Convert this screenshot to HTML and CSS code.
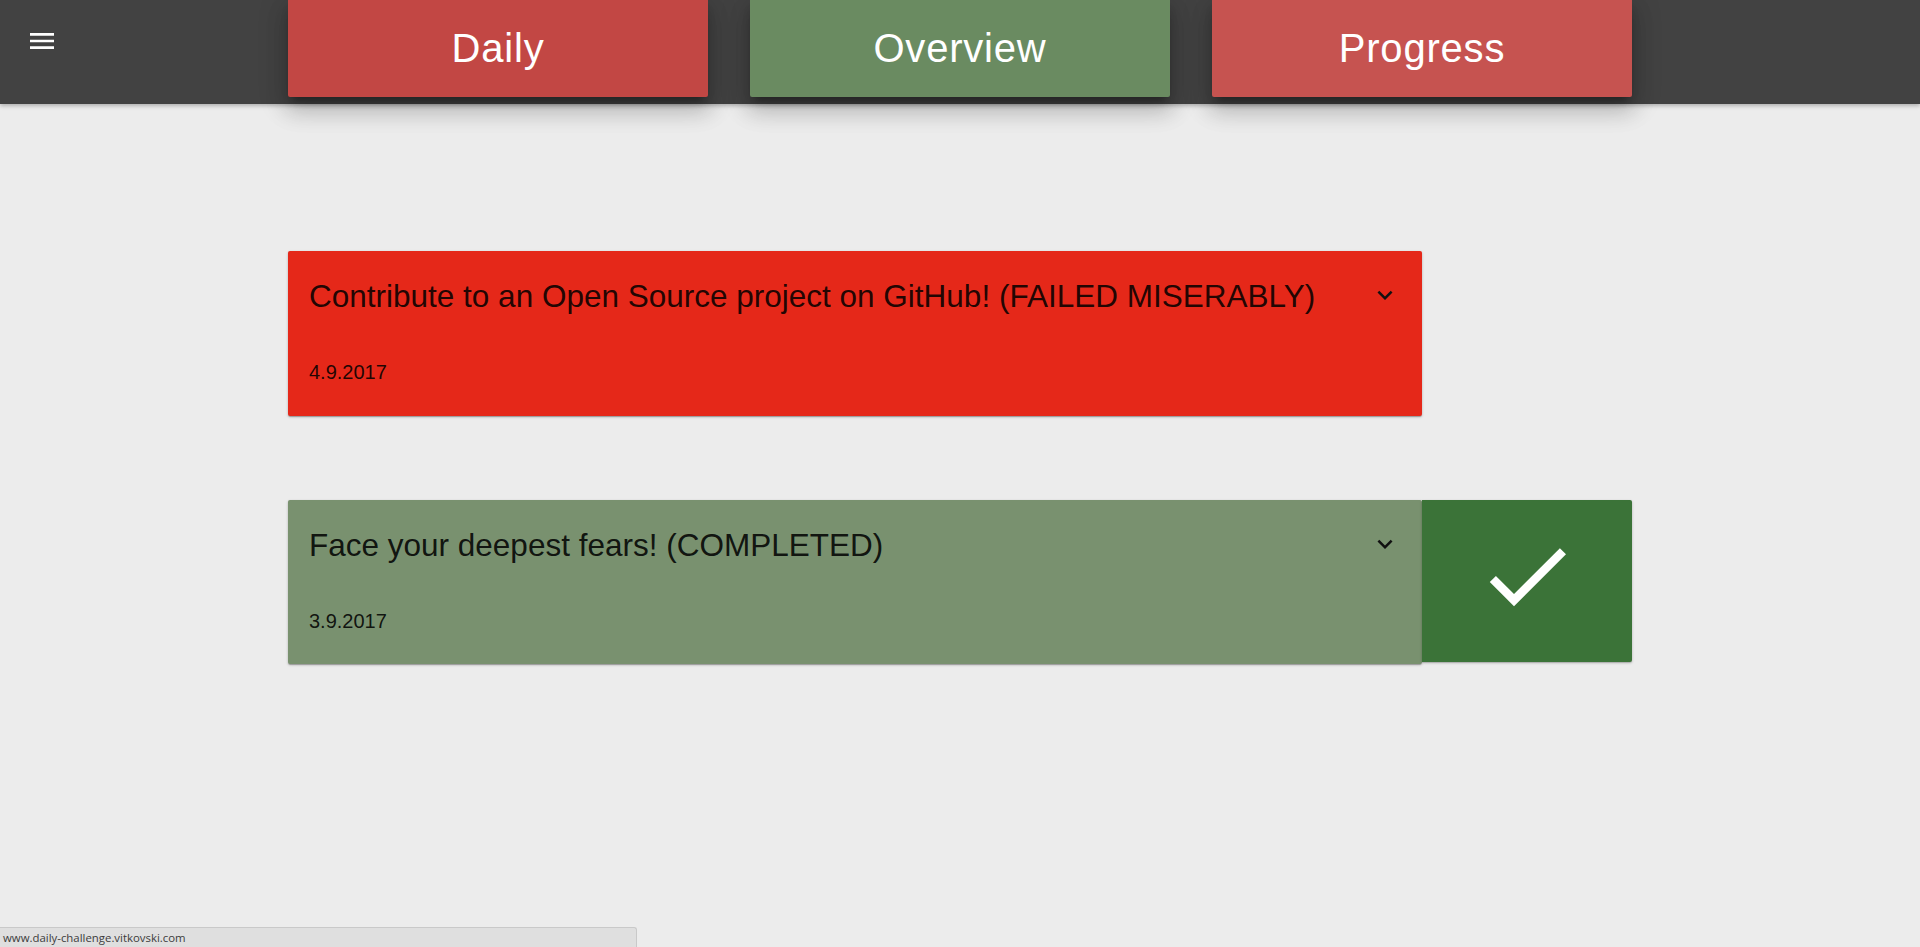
FILE: index.html
```html
<!DOCTYPE html>
<html lang="en">
<head>
<meta charset="utf-8">
<title>Daily Challenge</title>
<link rel="stylesheet" href="styles.css">
</head>
<body>
<header class="topbar">
  <button class="menu-btn" aria-label="menu">
    <svg viewBox="0 0 24 24" width="32" height="32"><path fill="#fff" d="M3 18h18v-2H3v2zm0-5h18v-2H3v2zm0-7v2h18V6H3z"/></svg>
  </button>
  <nav class="tabs">
    <a class="tab tab-daily">Daily</a>
    <a class="tab tab-overview">Overview</a>
    <a class="tab tab-progress">Progress</a>
  </nav>
</header>

<main class="content">
  <div class="row">
    <section class="card card-failed">
      <div class="card-head">
        <h2 class="card-title">Contribute to an Open Source project on GitHub! (FAILED MISERABLY)</h2>
        <svg class="chevron" viewBox="0 0 24 24" width="30" height="30"><path fill="#111" d="M16.59 8.59L12 13.17 7.41 8.59 6 10l6 6 6-6z"/></svg>
      </div>
      <div class="card-date">4.9.2017</div>
    </section>
  </div>

  <div class="row">
    <section class="card card-done">
      <div class="card-head">
        <h2 class="card-title">Face your deepest fears! (COMPLETED)</h2>
        <svg class="chevron" viewBox="0 0 24 24" width="30" height="30"><path fill="#111" d="M16.59 8.59L12 13.17 7.41 8.59 6 10l6 6 6-6z"/></svg>
      </div>
      <div class="card-date">3.9.2017</div>
    </section>
    <div class="check-box">
      <svg viewBox="0 0 24 24" width="104" height="104"><path fill="#fff" d="M9 16.17L4.83 12l-1.42 1.41L9 19 21 7l-1.41-1.41z"/></svg>
    </div>
  </div>
</main>

<div class="status-bar">www.daily-challenge.vitkovski.com</div>
</body>
</html>
```

FILE: styles.css
```css
html, body {
  margin: 0;
  padding: 0;
}

body {
  background: #ececec;
  font-family: "Liberation Sans", Arial, sans-serif;
  min-height: 947px;
}

.topbar {
  position: relative;
  height: 104px;
  background: #424242;
  box-shadow: 0 2px 4px rgba(0, 0, 0, 0.25);
  z-index: 2;
}

.menu-btn {
  position: absolute;
  left: 26px;
  top: 25px;
  width: 32px;
  height: 32px;
  padding: 0;
  border: 0;
  background: none;
  cursor: pointer;
}

.menu-btn svg {
  display: block;
}

.tabs {
  width: 1344px;
  margin: 0 auto;
  display: flex;
  gap: 42px;
}

.tab {
  width: 420px;
  height: 97px;
  display: flex;
  align-items: center;
  justify-content: center;
  color: #fff;
  font-size: 40px;
  letter-spacing: 0.8px;
  border-radius: 0 0 2px 2px;
  box-shadow: 0 14px 22px 2px rgba(0, 0, 0, 0.14), 0 6px 28px 5px rgba(0, 0, 0, 0.12), 0 7px 9px -4px rgba(0, 0, 0, 0.35);
  cursor: pointer;
}

.tab-daily { background: #c24744; }
.tab-overview { background: #6a8b61; }
.tab-progress { background: #c65350; }

.content {
  width: 1344px;
  margin: 147px auto 0;
  display: flex;
  flex-direction: column;
  gap: 84px;
}

.row {
  display: flex;
  align-items: flex-start;
}

.card {
  width: 1134px;
  box-sizing: border-box;
  height: 165px;
  padding: 27px 22px 0 21px;
  border-radius: 2px;
  box-shadow: 0 1px 3px rgba(0, 0, 0, 0.2), 0 1px 1px rgba(0, 0, 0, 0.14), 0 2px 1px -1px rgba(0, 0, 0, 0.12);
  color: rgba(0, 0, 0, 0.87);
}

.card-failed { background: #e52819; }
.card-done { background: #79916f; height: 164px; }

.card-head {
  display: flex;
  align-items: center;
  justify-content: space-between;
}

.card-title {
  margin: 0;
  font-size: 31.5px;
  font-weight: normal;
  line-height: 36px;
}

.chevron {
  display: block;
  flex: none;
  margin-top: -2px;
}

.card-date {
  margin-top: 46px;
  font-size: 20px;
  line-height: 24px;
}

.check-box {
  width: 210px;
  height: 162px;
  background: #3b7338;
  border-radius: 0 2px 2px 0;
  box-shadow: 0 1px 3px rgba(0, 0, 0, 0.2), 0 1px 1px rgba(0, 0, 0, 0.14);
  display: flex;
  align-items: center;
  justify-content: center;
}

.check-box svg {
  display: block;
  margin-bottom: 10px;
}

.status-bar {
  position: fixed;
  left: 0;
  bottom: 0;
  width: 637px;
  height: 20px;
  box-sizing: border-box;
  padding: 3px 0 0 3px;
  background: #dfdfdf;
  border-top: 1px solid #c9c9c9;
  border-right: 1px solid #c9c9c9;
  border-top-right-radius: 3px;
  color: #3c3c3c;
  font-family: "Open Sans", "Liberation Sans", sans-serif;
  font-size: 11.4px;
  line-height: 14px;
  white-space: nowrap;
}
```
